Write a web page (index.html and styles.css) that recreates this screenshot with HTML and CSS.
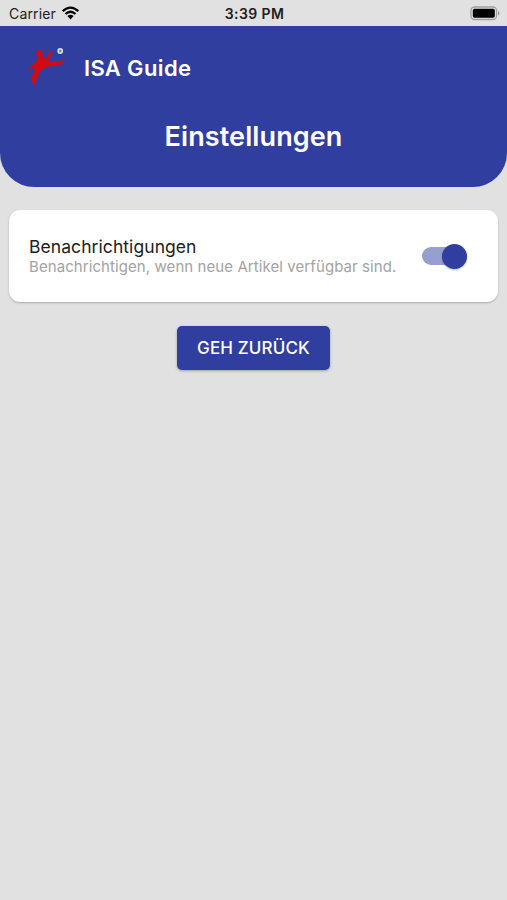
FILE: index.html
```html
<!DOCTYPE html>
<html lang="de">
<head>
<meta charset="utf-8">
<title>ISA Guide</title>
<link rel="stylesheet" href="styles.css">
</head>
<body>
<div class="status">
  <div class="carrier"><span>Carrier</span>
    <svg class="wifi" width="19" height="14" viewBox="0 0 18 14"><path d="M1.2 5.2Q9-2 16.800 5.200M4 8Q9 3.500 14 8" fill="none" stroke="#050505" stroke-width="2.300"/><path d="M5.900 10.100Q9 7.500 12.100 10.100L9 13.400Z" fill="#050505"/></svg>
  </div>
  <time class="clock">3:39 PM</time>
  <svg class="battery" width="30" height="15" viewBox="0 0 30 15"><rect x="1" y="1" width="25.500" height="12.500" rx="3.500" fill="#e2e2e2" stroke="#a0a0a0" stroke-width="1.300"/><rect x="2.800" y="2.800" width="22" height="9" rx="1.800"/><path d="M28 5Q31 7.200 28 9.500Z" fill="#999"/></svg>
</div>
<header class="header">
  <div class="brand">
    <svg class="logo" width="40" height="42" viewBox="0 0 40 42"><circle cx="11.500" cy="6.300" r="3.200" fill="#d00b12"/><path d="M10.500 8L15 9L16 11.500L18.500 10.500L21.500 5L23 3L24.200 4L23.500 7.500L21.500 12L19.500 15L27 14.500L32.500 14.500L35 12L36.200 12.500L34.800 17L32 17.800L26 18.500L19.500 20L14.500 22L11.500 26L8.500 32.500L7.800 36L7.700 39L5.700 38L3.600 33L4 29L7 22L5 21L3 21.500L2.200 24L.700 23.500L2 20L7 15.500L10 12Z" fill="#d00b12"/><circle cx="32.200" cy="4" r="2.900" fill="#d9dde5"/><path d="M31 3.500L32.200 2.500L33.500 3.500L33 5.200H31.500Z" fill="#747b86"/></svg>
    <span class="name">ISA Guide</span>
  </div>
  <h1 class="title">Einstellungen</h1>
</header>
<main>
  <section class="card">
    <div class="copy">
      <div class="label">Benachrichtigungen</div>
      <div class="hint">Benachrichtigen, wenn neue Artikel verfügbar sind.</div>
    </div>
    <div class="switch" role="switch" aria-checked="true" aria-label="Benachrichtigungen"><span class="thumb"></span></div>
  </section>
  <button class="back">GEH ZURÜCK</button>
</main>
</body>
</html>
```
FILE: styles.css
```css
* { box-sizing: border-box; }
body {
  margin: 0;
  min-height: 900px;
  background: #e1e1e1;
  font-family: Inter, "Liberation Sans", sans-serif;
}
.status {
  display: grid;
  grid-template-columns: 1fr auto 1fr;
  align-items: center;
  height: 26px;
  padding: 1px 7px 0 9px;
  color: #202020;
  font-size: 14px;
  line-height: 24px;
}
.carrier { display: flex; align-items: center; gap: 5px; }
.carrier span { letter-spacing: 0.15px; }
.wifi { margin-top: -2px; }
.clock { font-weight: 600; letter-spacing: 0.4px; }
.battery { justify-self: end; }
.header {
  height: 161px;
  padding-top: 19px;
  background: #303f9f;
  border-radius: 0 0 34px 34px;
  color: #fff;
}
.brand { display: flex; align-items: center; gap: 16px; padding-left: 28px; height: 46px; }
.name { font-size: 22px; font-weight: 600; line-height: 30px; letter-spacing: 0.35px; }
.title {
  margin: 28px 0 0;
  font-size: 27px;
  font-weight: 600;
  line-height: 36px;
  letter-spacing: 0.1px;
  text-align: center;
}
.card {
  display: flex;
  align-items: center;
  justify-content: space-between;
  height: 92px;
  margin: 23px 9px 24px;
  padding: 0 32px 0 20px;
  background: #fff;
  border-radius: 11px;
  box-shadow: 0 1px 2px rgba(0, 0, 0, 0.24);
}
.copy { white-space: nowrap; padding-top: 1px; }
.label { font-size: 17.5px; line-height: 20px; letter-spacing: 0.07px; color: #202020; }
.hint { font-size: 15px; line-height: 19px; letter-spacing: 0.08px; color: #a3a3a3; }
.switch {
  display: flex;
  align-items: center;
  justify-content: flex-end;
  width: 44px;
  height: 18px;
  border-radius: 9px;
  background: #979fcf;
}
.thumb {
  flex: none;
  width: 25px;
  height: 25px;
  margin-right: -1px;
  border-radius: 50%;
  background: #303f9f;
  box-shadow: 0 1px 2px rgba(0, 0, 0, 0.3);
}
.back {
  display: block;
  width: 153px;
  height: 44px;
  margin: 0 auto;
  padding: 0;
  border: 0;
  border-radius: 5px;
  background: #303f9f;
  color: #fff;
  font: 500 17px/44px Inter, "Liberation Sans", sans-serif;
  letter-spacing: 0.15px;
  box-shadow: 0 1px 3px rgba(0, 0, 0, 0.3);
}
```
